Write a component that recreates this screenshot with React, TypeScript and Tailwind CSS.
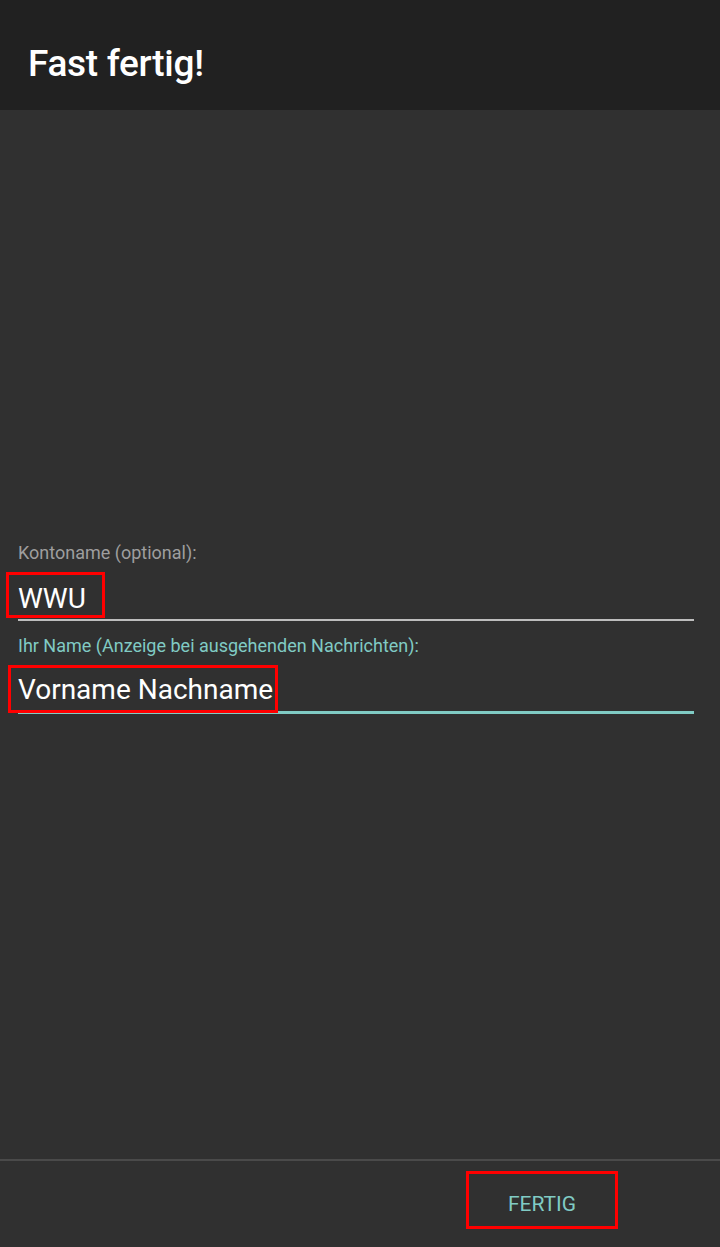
import React from "react";

export default function App() {
  return (
    <div
      className="flex h-[1247px] w-[720px] flex-col bg-[#303030]"
      style={{ fontFamily: "Roboto, 'Noto Sans', sans-serif" }}
    >
      <header className="flex h-[110px] items-center bg-[#212121] pl-[28px] pt-[16px]">
        <h1 className="text-[37px] font-medium leading-none text-white tracking-[-0.3px]">
          Fast fertig!
        </h1>
      </header>
      <main className="flex-1 pl-[18px] pr-[26px] pt-[433px]">
        <div className="text-[18px] leading-[20px] text-[#9e9e9e]">Kontoname (optional):</div>
        <div className="relative border-b-2 border-[#bdbdbd] pb-[2px] pt-[18px] text-[28px] leading-[36px] text-white">
          WWU
          <div className="absolute left-[-12px] top-[9px] h-[46px] w-[99px] border-[3px] border-[#ff0000]" />
        </div>
        <div className="mt-[15px] text-[18px] leading-[20px] text-[#80cbc4]">
          Ihr Name (Anzeige bei ausgehenden Nachrichten):
        </div>
        <div className="relative border-b-[3px] border-[#80cbc4] pb-[3px] pt-[16px] text-[28px] leading-[36px] text-white">
          Vorname Nachname
          <div className="absolute left-[-10px] top-[9px] h-[48px] w-[270px] border-[3px] border-[#ff0000]" />
        </div>
      </main>
      <footer className="border-t-2 border-[#4a4a4a]">
        <div className="flex h-[86px] items-start justify-end pr-[102px] pt-[10px]">
          <div className="relative flex h-[58px] w-[152px] items-center justify-center pt-[8px]">
            <span className="text-[21px] font-normal leading-none text-[#80cbc4]">FERTIG</span>
            <div className="absolute inset-0 border-[3px] border-[#ff0000]" />
          </div>
        </div>
      </footer>
    </div>
  );
}
